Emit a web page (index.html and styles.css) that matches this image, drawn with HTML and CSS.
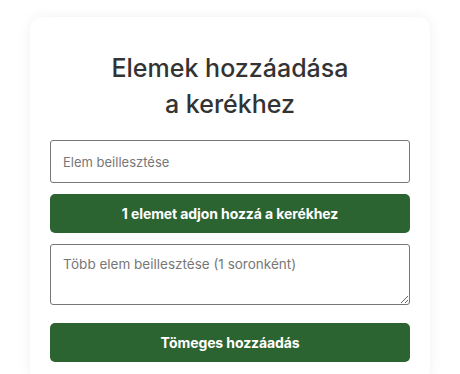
FILE: index.html
```html
<!DOCTYPE html>
<html lang="hu">
<head>
<meta charset="utf-8">
<title>Elemek hozzáadása a kerékhez</title>
<link rel="stylesheet" href="styles.css">
</head>
<body>
<div class="card">
  <h2 class="title">Elemek hozzáadása<br>a kerékhez</h2>
  <input class="field" type="text" placeholder="Elem beillesztése">
  <button class="btn btn-single">1 elemet adjon hozzá a kerékhez</button>
  <textarea class="area" placeholder="Több elem beillesztése (1 soronként)"></textarea>
  <button class="btn btn-bulk">Tömeges hozzáadás</button>
</div>
</body>
</html>
```
FILE: styles.css
```css
html, body {
  margin: 0;
  padding: 0;
  background: #ffffff;
  font-family: Inter, "Open Sans", sans-serif;
  overflow: hidden;
}
.card {
  width: 400px;
  box-sizing: border-box;
  margin: 17px auto 0;
  padding: 33px 20px 20px;
  background: #fff;
  border-radius: 12px;
  box-shadow: 0 0 14px rgba(0, 0, 0, 0.06);
  display: flex;
  flex-direction: column;
}
.title {
  margin: 0 0 18px;
  text-align: center;
  font-size: 25px;
  line-height: 36px;
  font-weight: 500;
  color: #333;
}
.field, .area {
  box-sizing: border-box;
  width: 100%;
  border: 1px solid #767676;
  border-radius: 3px;
  font-family: inherit;
  font-size: 13px;
  color: #333;
  padding: 0 12px;
  margin: 0;
}
.field {
  height: 43px;
}
.area {
  height: 61px;
  padding-top: 11px;
  font-size: 13.5px;
  resize: vertical;
}
.field::placeholder, .area::placeholder {
  color: #777;
}
.btn {
  height: 39px;
  border: 0;
  border-radius: 5px;
  background: #2c6431;
  color: #fff;
  font-family: inherit;
  font-size: 14px;
  font-weight: 700;
  letter-spacing: -0.1px;
  margin: 0;
}
.btn-single {
  margin: 11px 0;
}
.btn-bulk {
  margin-top: 18px;
}
```
